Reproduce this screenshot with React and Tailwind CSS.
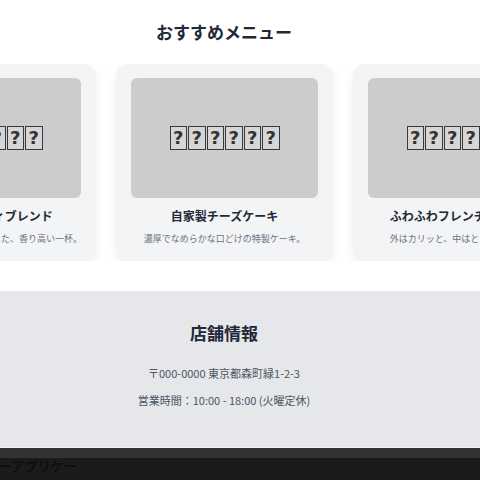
import React from "react";

const jp = { fontFamily: '"Noto Sans CJK JP", "Noto Sans", sans-serif' };

const menu = [
  { name: "スペシャルティブレンド", desc: "厳選した豆を丁寧に焙煎した、香り高い一杯。" },
  { name: "自家製チーズケーキ", desc: "濃厚でなめらかな口どけの特製ケーキ。" },
  { name: "ふわふわフレンチトースト", desc: "外はカリッと、中はとろける食感。" },
];

// Fallback boxes shown where the emoji font is missing
function Tofu() {
  return (
    <div className="flex gap-[1px]">
      {[0, 1, 2, 3, 4, 5].map((i) => (
        <span
          key={i}
          className="flex h-[24px] w-[17.5px] items-center justify-center border border-[#3a3a3a] bg-[#d6d6d6] text-[18px] font-bold leading-none text-[#333]"
          style={{ fontFamily: '"DejaVu Sans", sans-serif' }}
        >
          ?
        </span>
      ))}
    </div>
  );
}

function Card({ name, desc }) {
  return (
    <div className="flex w-[217px] shrink-0 flex-col items-center rounded-xl bg-[#f3f4f6] px-[15px] pb-[15px] pt-[14px] shadow-[0_4px_10px_rgba(0,0,0,0.07)]">
      <div className="flex h-[120px] w-full items-center justify-center overflow-hidden rounded-md bg-[#cccccc]">
        <Tofu />
      </div>
      <h3 className="mt-[9px] whitespace-nowrap text-[12px] font-bold leading-[18px] text-[#1f2937]">{name}</h3>
      <p className="mt-[7px] whitespace-nowrap text-[9px] leading-[14px] text-[#6b7280]">{desc}</p>
    </div>
  );
}

export default function App() {
  return (
    <div className="h-[480px] w-[480px] overflow-hidden bg-white" style={jp}>
      <section className="pt-5 pb-[30px]">
        <h2 className="w-[448px] text-center text-[17px] font-bold leading-6 text-[#1f2937]">おすすめメニュー</h2>
        <div className="mt-5 overflow-hidden">
          <div className="ml-[-121px] flex gap-5">
            {menu.map((m) => (
              <Card key={m.name} {...m} />
            ))}
          </div>
        </div>
      </section>
      <section className="bg-[#e5e7eb] pt-[30px] pb-[39px]">
        <div className="flex w-[448px] flex-col items-center">
          <h2 className="text-[17px] font-bold leading-6 text-[#1f2937]">店舗情報</h2>
          <p className="mt-5 text-[11px] leading-4 text-[#4b5563]">〒000-0000 東京都森町緑1-2-3</p>
          <p className="mt-[11px] text-[11px] leading-4 text-[#4b5563]">営業時間：10:00 - 18:00 (火曜定休)</p>
        </div>
      </section>
      <footer className="border-t border-[#f3f3f3]">
        <div className="h-[10px] bg-[#333333]" />
        <div className="h-[40px] bg-[#1b1b1b]">
          <span className="ml-[-1px] block text-[13px] font-bold leading-[15px] text-[#0e0e0e]">ーアプリケー</span>
        </div>
      </footer>
    </div>
  );
}
